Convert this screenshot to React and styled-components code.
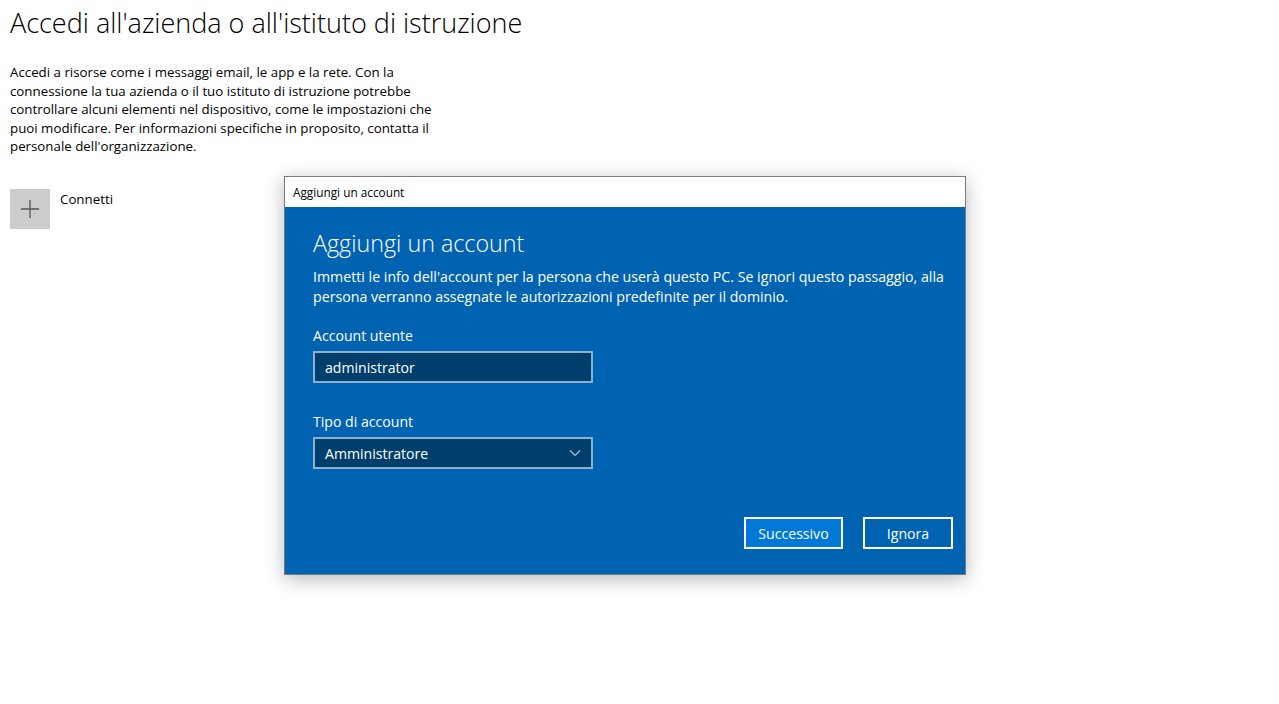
import React from 'react';
import styled, { createGlobalStyle } from 'styled-components';

const GlobalStyle = createGlobalStyle`
  html, body {
    margin: 0;
    padding: 0;
    background: #fff;
  }
  body {
    font-family: "Segoe UI", "Open Sans", "Noto Sans", sans-serif;
    color: #000;
  }
`;

const Page = styled.div`
  position: relative;
  width: 1279px;
  height: 704px;
  padding: 0 10px;
  box-sizing: border-box;
  overflow: hidden;
`;

const Title = styled.h1`
  margin: 0;
  padding-top: 5px;
  font-size: 27px;
  font-weight: 300;
  line-height: 36px;
  color: #000;
`;

const Intro = styled.p`
  margin: 22px 0 0;
  font-size: 13.3px;
  line-height: 18.6px;
  color: #000;
`;

const ConnectRow = styled.div`
  display: flex;
  align-items: flex-start;
  gap: 10px;
  margin-top: 33px;
`;

const PlusTile = styled.div`
  width: 40px;
  height: 40px;
  background: #cccccc;
  display: flex;
  align-items: center;
  justify-content: center;
`;

const ConnectLabel = styled.span`
  font-size: 13.3px;
  line-height: 20px;
`;

const Dialog = styled.div`
  position: absolute;
  left: 284px;
  top: 176px;
  width: 682px;
  height: 399px;
  box-sizing: border-box;
  border: 1px solid #7a7a7a;
  background: #0063b1;
  box-shadow: 0 4px 18px rgba(0, 0, 0, 0.28);
  display: flex;
  flex-direction: column;
`;

const TitleBar = styled.div`
  height: 30px;
  background: #fff;
  display: flex;
  align-items: center;
  padding-left: 8px;
  font-size: 11.8px;
  color: #000;
`;

const Body = styled.div`
  flex: 1;
  padding: 20px 12px 25px 28px;
  display: flex;
  flex-direction: column;
  color: #fff;
`;

const Heading = styled.h2`
  margin: 0;
  font-size: 23.3px;
  font-weight: 300;
  line-height: 32px;
`;

const Desc = styled.p`
  margin: 8px 0 0;
  font-size: 14.2px;
  line-height: 20px;
`;

const Field = styled.div`
  display: flex;
  flex-direction: column;
  margin-top: ${(p) => p.$top}px;
`;

const Label = styled.label`
  font-size: 14.1px;
  line-height: 20px;
  margin-bottom: 5px;
`;

const Box = styled.div`
  width: 280px;
  height: 32px;
  box-sizing: border-box;
  border: 2px solid #8eb0cc;
  background: #003e6b;
  display: flex;
  align-items: center;
  justify-content: space-between;
  padding: 0 10px;
  font-size: 14.1px;
  color: #fff;
`;

const Actions = styled.div`
  margin-top: auto;
  display: flex;
  justify-content: flex-end;
  gap: 20px;
`;

const Button = styled.button`
  height: 32px;
  width: ${(p) => p.$w}px;
  box-sizing: border-box;
  border: 2px solid #fff;
  background: ${(p) => (p.$primary ? '#0078d7' : 'transparent')};
  color: #fff;
  font-family: inherit;
  font-size: 14.1px;
  padding: 0;
  cursor: pointer;
`;

const Chevron = () => (
  <svg width="12" height="8" viewBox="0 0 12 8">
    <path d="M1 1.5 L6 6.5 L11 1.5" fill="none" stroke="#a9c3d9" strokeWidth="1.2" />
  </svg>
);

const Plus = () => (
  <svg width="18" height="18" viewBox="0 0 18 18">
    <path d="M9 0 V18 M0 9 H18" stroke="#555" strokeWidth="1.3" />
  </svg>
);

export default function App() {
  return (
    <>
      <GlobalStyle />
      <Page>
        <Title>Accedi all'azienda o all'istituto di istruzione</Title>
        <Intro>
          Accedi a risorse come i messaggi email, le app e la rete. Con la
          <br />
          connessione la tua azienda o il tuo istituto di istruzione potrebbe
          <br />
          controllare alcuni elementi nel dispositivo, come le impostazioni che
          <br />
          puoi modificare. Per informazioni specifiche in proposito, contatta il
          <br />
          personale dell'organizzazione.
        </Intro>
        <ConnectRow>
          <PlusTile>
            <Plus />
          </PlusTile>
          <ConnectLabel>Connetti</ConnectLabel>
        </ConnectRow>

        <Dialog>
          <TitleBar>Aggiungi un account</TitleBar>
          <Body>
            <Heading>Aggiungi un account</Heading>
            <Desc>
              Immetti le info dell'account per la persona che userà questo PC. Se ignori questo passaggio, alla
              <br />
              persona verranno assegnate le autorizzazioni predefinite per il dominio.
            </Desc>
            <Field $top={19}>
              <Label>Account utente</Label>
              <Box>administrator</Box>
            </Field>
            <Field $top={29}>
              <Label>Tipo di account</Label>
              <Box>
                Amministratore
                <Chevron />
              </Box>
            </Field>
            <Actions>
              <Button $primary $w={99}>Successivo</Button>
              <Button $w={90}>Ignora</Button>
            </Actions>
          </Body>
        </Dialog>
      </Page>
    </>
  );
}
